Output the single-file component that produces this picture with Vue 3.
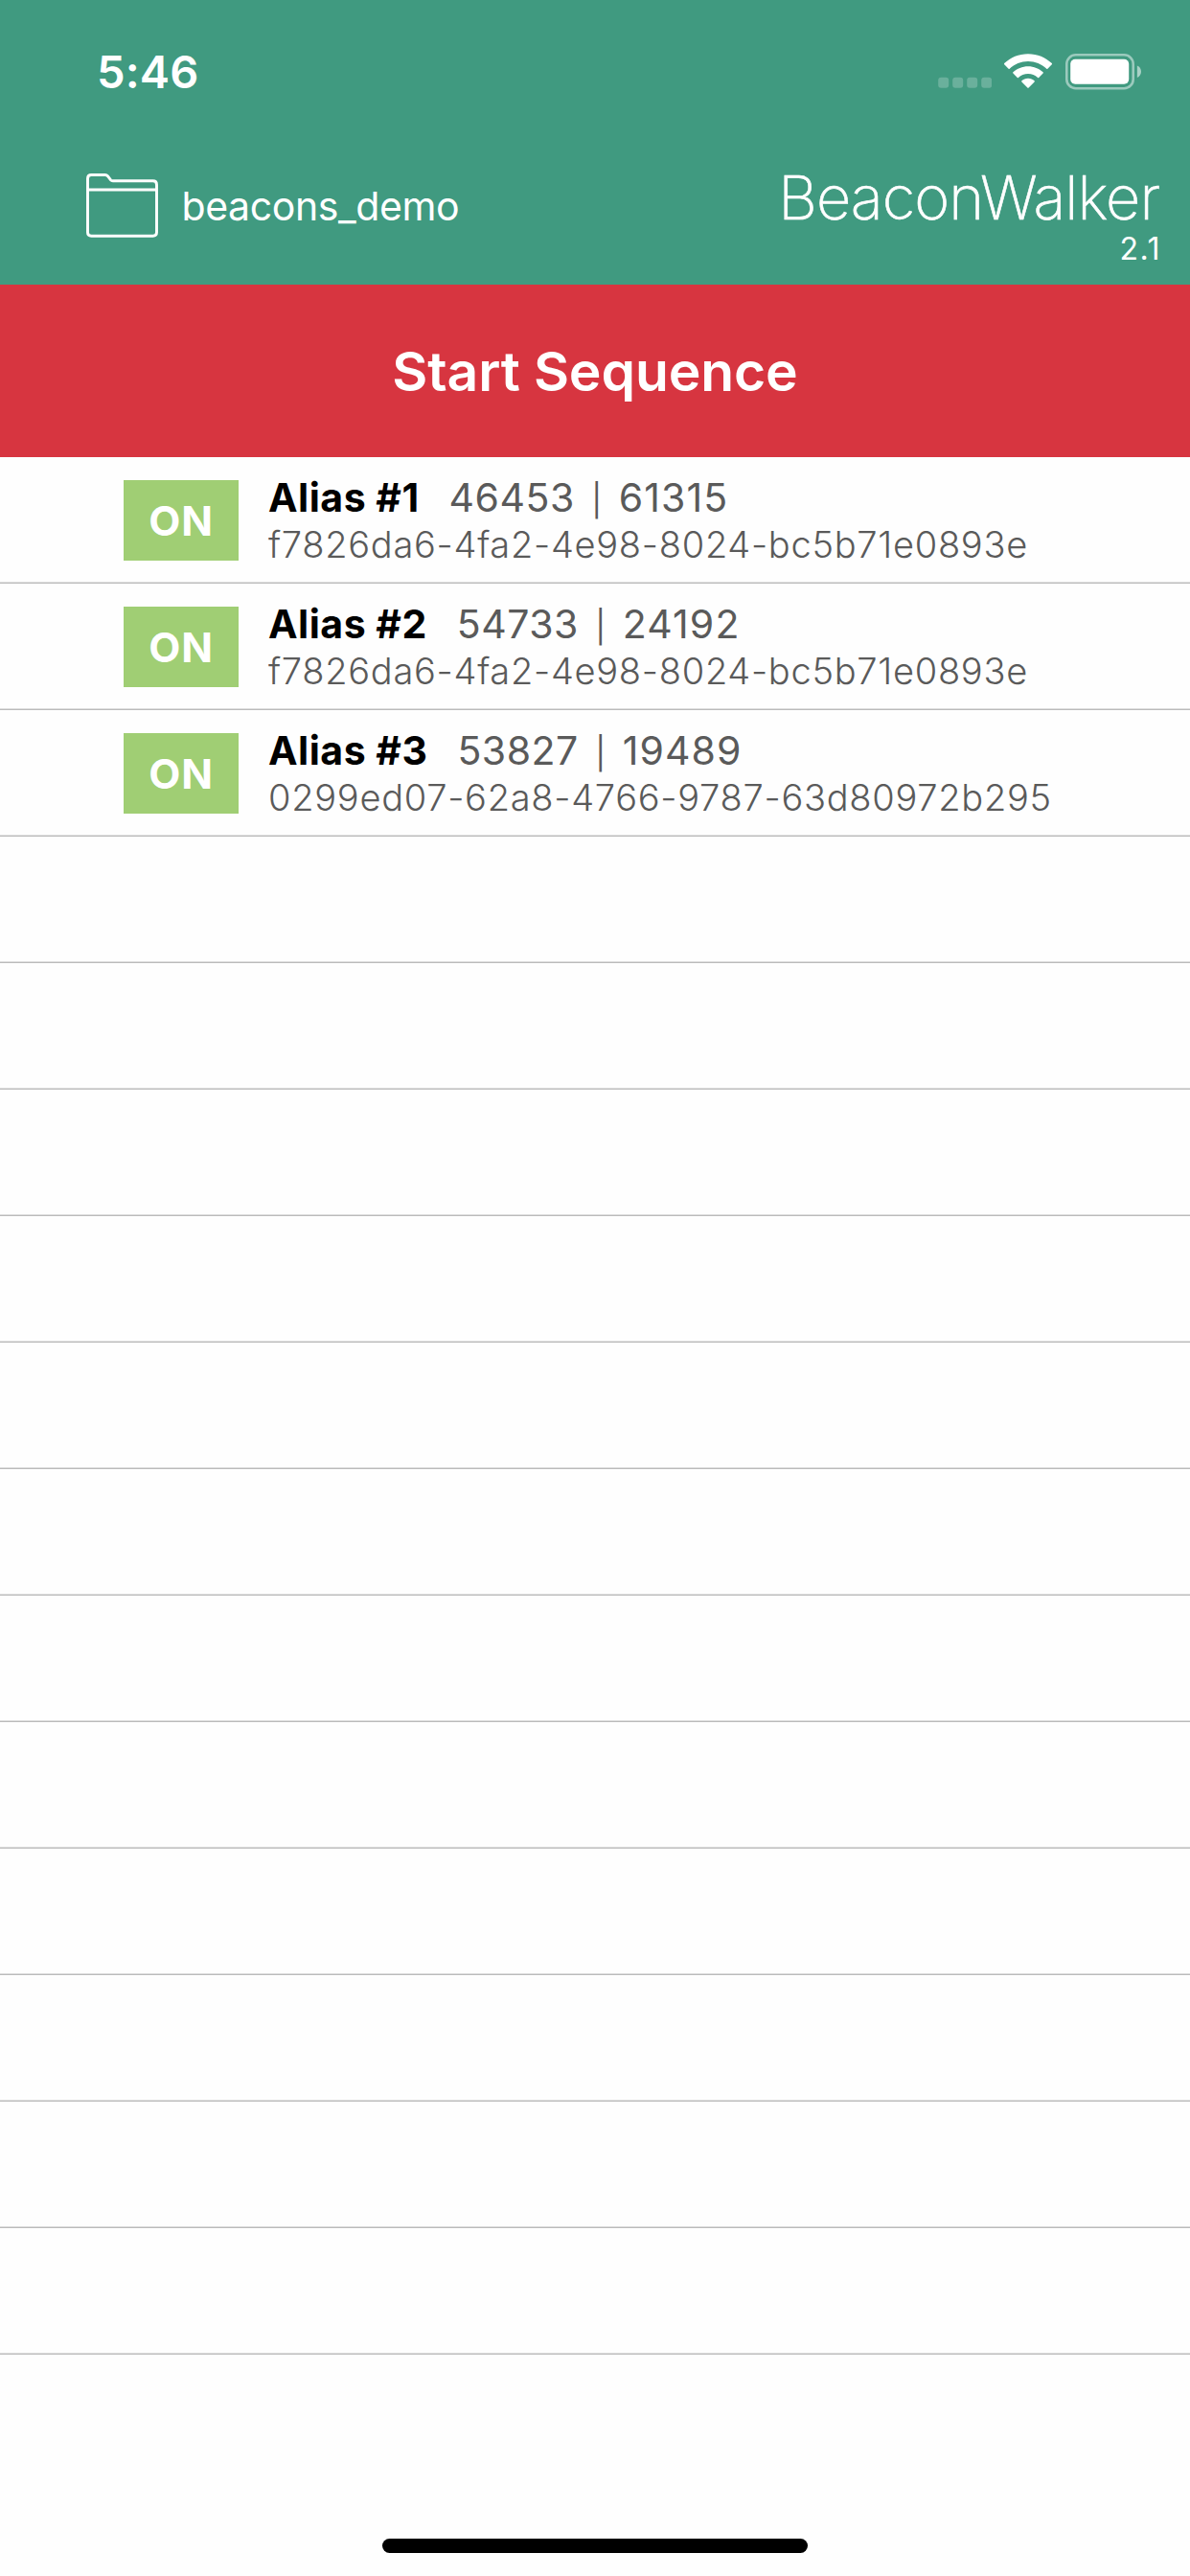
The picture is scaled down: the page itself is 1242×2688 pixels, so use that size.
<script setup>
const beacons = [
  { alias: 'Alias #1', major: '46453', minor: '61315', uuid: 'f7826da6-4fa2-4e98-8024-bc5b71e0893e' },
  { alias: 'Alias #2', major: '54733', minor: '24192', uuid: 'f7826da6-4fa2-4e98-8024-bc5b71e0893e' },
  { alias: 'Alias #3', major: '53827', minor: '19489', uuid: '0299ed07-62a8-4766-9787-63d80972b295' },
]
const emptyRows = 12
</script>

<template>
  <div class="screen">
    <header class="header">
      <div class="status">
        <span class="time">5:46</span>
        <div class="indicators">
          <svg class="signal" width="56" height="37" viewBox="0 0 56 37" fill="#fff" fill-opacity=".22">
            <rect v-for="n in 4" :key="n" :x="(n - 1) * 15 + 0.2" y="24.8" width="11" height="11" rx="3" />
          </svg>
          <svg class="wifi" width="50" height="37" viewBox="0 0 50 37" fill="#fff">
            <path d="M25 0.2C34.6 0.2 43.3 3.9 49.8 10.1Q50.3 10.7 49.8 11.2L45.4 15.7Q44.9 16.2 44.3 15.7C39.2 10.9 32.4 8 25 8S10.8 10.9 5.7 15.7Q5.1 16.2 4.6 15.7L0.2 11.2Q-0.3 10.7 0.2 10.1C6.7 3.9 15.4 0.2 25 0.2Z" />
            <path d="M25 13.2C31 13.2 36.5 15.5 40.6 19.3Q41.2 19.9 40.6 20.5L36.2 24.9Q35.7 25.4 35.1 24.9C32.4 22.5 28.9 21 25 21S17.6 22.5 14.9 24.9Q14.3 25.4 13.8 24.9L9.4 20.5Q8.8 19.9 9.4 19.3C13.5 15.5 19 13.2 25 13.2Z" />
            <path d="M25 25.7C27.6 25.7 29.9 26.7 31.6 28.3Q32.2 28.9 31.6 29.5L25.6 35.6Q25 36.2 24.4 35.6L18.4 29.5Q17.8 28.9 18.4 28.3C20.1 26.7 22.4 25.7 25 25.7Z" />
          </svg>
          <svg class="battery" width="80" height="38" viewBox="0 0 80 38">
            <rect x="1.3" y="1.3" width="69.4" height="34.9" rx="9.5" fill="none" stroke="#fff" stroke-opacity=".48" stroke-width="2.6" />
            <rect x="5.2" y="5.8" width="61" height="26" rx="5" fill="#fff" />
            <path d="M74.9 12.5C77.3 13.4 79 15.8 79 18.7S77.3 24 74.9 24.9Z" fill="#fff" fill-opacity=".55" />
          </svg>
        </div>
      </div>
      <div class="nav">
        <div class="file">
          <svg class="folder" width="76" height="67" viewBox="0 0 76 67" fill="none" stroke="#fff" stroke-width="2.9">
            <path d="M1.5 61.5V5.4Q1.5 1.5 5.4 1.5H19.8Q21.4 1.5 22.4 2.7L25.6 6.9Q26.4 7.8 27.8 7.8H69.6Q73.5 7.8 73.5 11.7V61.5Q73.5 65.2 69.6 65.2H5.4Q1.5 65.2 1.5 61.5Z" />
            <path d="M1.5 17H73.5" />
          </svg>
          <span class="filename">beacons_demo</span>
        </div>
        <div class="brand">
          <span class="title">BeaconWalker</span>
          <span class="version">2.1</span>
        </div>
      </div>
    </header>

    <button class="start">Start Sequence</button>

    <main class="list">
      <div v-for="b in beacons" :key="b.alias" class="row">
        <div class="badge">ON</div>
        <div class="info">
          <div class="line">
            <span class="alias">{{ b.alias }}</span>
            <span class="major">{{ b.major }}</span>
            <span class="bar">|</span>
            <span class="minor">{{ b.minor }}</span>
          </div>
          <div class="uuid">{{ b.uuid }}</div>
        </div>
      </div>
      <div v-for="n in emptyRows" :key="n" class="row"></div>
    </main>

    <footer class="footer"><div class="home"></div></footer>
  </div>
</template>

<style>
body {
  margin: 0;
  background: #fff;
}
</style>

<style scoped>
.screen {
  display: flex;
  flex-direction: column;
  width: 1242px;
  height: 2688px;
  overflow: hidden;
  background: #fefefe;
  font-family: Inter, "Liberation Sans", sans-serif;
}
.header {
  flex: none;
  height: 297px;
  background: #409a80;
  color: #fff;
}
.status {
  display: flex;
  justify-content: space-between;
  align-items: center;
  box-sizing: border-box;
  height: 149px;
  padding: 0 50px 0 101px;
}
.time {
  font-size: 47px;
  font-weight: 600;
  letter-spacing: 0.1px;
  line-height: 60px;
}
.indicators {
  display: flex;
  align-items: center;
}
.wifi {
  margin-left: 13px;
}
.battery {
  margin-left: 14px;
}
.nav {
  display: flex;
  justify-content: space-between;
  box-sizing: border-box;
  height: 148px;
  padding: 0 33px 0 90px;
}
.file {
  display: flex;
  align-items: center;
  height: 131px;
}
.filename {
  margin-left: 23.5px;
  font-size: 41px;
  letter-spacing: -0.4px;
  line-height: 60px;
}
.brand {
  display: flex;
  flex-direction: column;
  align-items: flex-end;
  padding-top: 27px;
}
.title {
  margin-right: -1px;
  font-size: 63px;
  font-weight: 200;
  letter-spacing: -0.98px;
  line-height: 60px;
  -webkit-text-stroke: 0.6px #fff;
}
.version {
  margin-right: -3px;
  font-size: 32px;
  letter-spacing: 1.5px;
  line-height: 48px;
}
.start {
  flex: none;
  height: 180px;
  padding: 0;
  border: 0;
  background: #d73540;
  color: #fff;
  font-family: inherit;
  font-size: 57px;
  font-weight: 600;
  letter-spacing: -0.13px;
}
.row {
  display: flex;
  box-sizing: border-box;
  height: 132px;
  padding-left: 129px;
  border-bottom: 1px solid #bbb;
  box-shadow: inset 0 -1px #dedede;
}
.badge {
  width: 120px;
  height: 84px;
  margin-top: 24px;
  background: #a0ce74;
  color: #fff;
  font-size: 43px;
  font-weight: 700;
  letter-spacing: 0.8px;
  line-height: 84px;
  text-align: center;
}
.info {
  padding: 18px 0 0 31px;
  color: #5a5a5a;
  white-space: nowrap;
}
.line {
  display: flex;
  align-items: baseline;
  height: 48px;
  font-size: 41px;
  line-height: 48px;
}
.alias {
  margin-right: 31px;
  color: #000;
  font-weight: 700;
  letter-spacing: 0.5px;
}
.major {
  letter-spacing: 0.5px;
}
.bar {
  width: 46px;
  font-size: 33px;
  text-align: center;
}
.minor {
  letter-spacing: 1.1px;
}
.uuid {
  font-size: 38px;
  font-weight: 300;
  letter-spacing: 0.72px;
  line-height: 50px;
}
.footer {
  display: flex;
  flex: 1;
  justify-content: center;
  align-items: flex-end;
  padding-bottom: 24px;
}
.home {
  width: 444px;
  height: 15px;
  border-radius: 8px;
  background: #000;
}
</style>
